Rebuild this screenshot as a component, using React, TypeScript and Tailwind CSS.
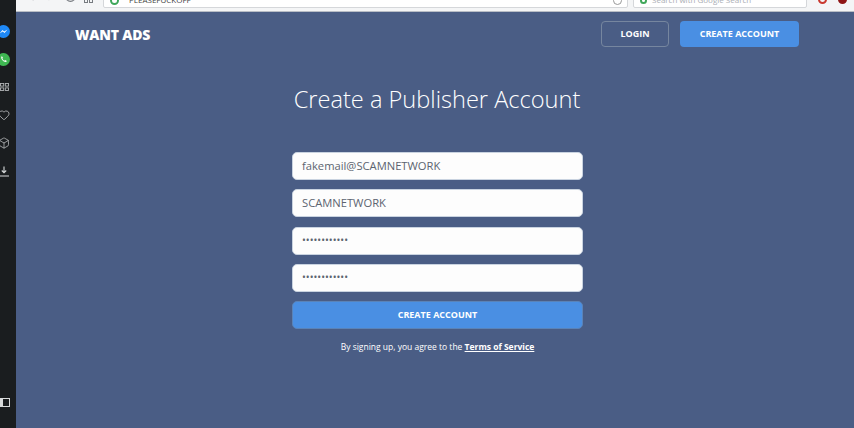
import { Heart, Box, RotateCw, ChevronLeft, ChevronRight } from 'lucide-react';

const Field = ({ value, secret }: { value: string; secret?: boolean }) => (
  <div className={secret ? 'flex h-[28px] w-full items-center rounded-[5px] border border-[#c9d3e0] bg-[#fdfdfd] px-[9px] text-[10.2px] text-[#5c6470]' : 'flex h-[28px] w-full items-center rounded-[5px] border border-[#c9d3e0] bg-[#fdfdfd] px-[9px] text-[11.2px] text-[#5c6470]'}>
    {value}
  </div>
);

const Sidebar = () => (
  <div className="flex w-[16px] shrink-0 flex-col bg-[#1a1d1f] pt-[17px] text-[#d8dadb]">
    <div className="flex h-[28px] items-center">
      <svg width="13" height="13" viewBox="0 0 13 13" className="-ml-[3px]">
        <circle cx="6.5" cy="6.5" r="6.5" fill="#1e88f5" />
        <path d="M2.5 8.5 L5.5 5 L7.2 6.6 L10.5 4.5 L7.5 8 L5.8 6.4 Z" fill="#fff" />
      </svg>
    </div>
    <div className="flex h-[28px] items-center">
      <svg width="13" height="13" viewBox="0 0 13 13" className="-ml-[3px]">
        <circle cx="6.5" cy="6.5" r="6.5" fill="#3fb752" />
        <path d="M4.3 3.6 C3.5 5.8 6.6 9.6 9.4 9 L9.6 7.8 L8 7 L7.3 7.7 C6.4 7.3 5.6 6.4 5.3 5.6 L6 4.9 L5.2 3.4 Z" fill="#fff" />
      </svg>
    </div>
    <div className="flex h-[28px] items-center">
      <svg width="9" height="8" viewBox="0 0 9 8" fill="none" stroke="currentColor" strokeWidth="0.9" opacity="0.8">
        <rect x="0.5" y="0.5" width="3.2" height="2.6" />
        <rect x="5.3" y="0.5" width="3.2" height="2.6" />
        <rect x="0.5" y="4.9" width="3.2" height="2.6" />
        <rect x="5.3" y="4.9" width="3.2" height="2.6" />
      </svg>
    </div>
    <div className="flex h-[28px] items-center">
      <Heart size={12} strokeWidth={1.4} className="-ml-[2px]" />
    </div>
    <div className="flex h-[28px] items-center">
      <Box size={12} strokeWidth={1.3} className="-ml-[2px]" />
    </div>
    <div className="flex h-[28px] items-center">
      <svg width="11" height="11" viewBox="0 0 11 11" fill="none" stroke="currentColor" strokeWidth="1.1" className="-ml-[1px]">
        <path d="M5 0.5 V6.5 M2.8 4.5 L5 6.8 L7.2 4.5 M0 10 H10" />
      </svg>
    </div>
    <div className="mt-auto mb-[21px] flex h-[9px] w-[10px] border border-[#d8dadb]">
      <div className="h-full w-[2px] bg-[#d8dadb]" />
    </div>
  </div>
);

const Toolbar = () => (
  <div className="flex h-[12px] shrink-0 items-start overflow-hidden border-b border-[#b9bec6] bg-[#f4f5f6] pl-[9px] text-[#777b80]">
    <ChevronLeft size={13} className="-mt-[10px]" />
    <ChevronRight size={13} className="-mt-[10px] ml-[6px] text-[#c8c8c8]" />
    <RotateCw size={13} className="-mt-[10px] ml-[7px]" />
    <svg width="9" height="8" viewBox="0 0 9 8" fill="none" stroke="currentColor" className="-mt-[5px] ml-[7px]">
      <rect x="0.5" y="0.5" width="3" height="7" />
      <rect x="5.5" y="0.5" width="3" height="7" />
    </svg>
    <div className="-mt-[8px] ml-[10px] flex h-[16px] w-[525px] shrink-0 items-center rounded-[2px] border border-[#d5d7da] bg-white pl-[6px] pr-[5px] text-[8px] text-[#444]">
      <div className="h-[9px] w-[9px] shrink-0 rounded-full border-2 border-[#3fa75a]" />
      <span className="ml-[10px]">PLEASEFUCKOFF</span>
      <div className="ml-auto h-[9px] w-[9px] rounded-full border border-[#999]" />
    </div>
    <div className="-mt-[8px] ml-[5px] flex h-[16px] w-[174px] shrink-0 items-center rounded-[2px] border border-[#d5d7da] bg-white pl-[6px] text-[8px] text-[#a9adb3]">
      <div className="h-[7px] w-[7px] shrink-0 rounded-full border-2 border-[#3fa75a]" />
      <span className="ml-[5px]">Search with Google Search</span>
    </div>
    <div className="-mt-[5px] ml-[11px] h-[9px] w-[9px] shrink-0 rounded-full border-2 border-[#c9382f]" />
    <div className="-mt-[5px] ml-[11px] h-[9px] w-[9px] shrink-0 rounded-full bg-[#8f1616]" />
  </div>
);

const App = () => {
  return (
    <div className="flex h-[428px] w-[854px] overflow-hidden bg-[#4a5d85] font-['Open_Sans',sans-serif]">
      <Sidebar />
      <div className="flex min-w-0 flex-1 flex-col">
        <Toolbar />
        <div className="flex items-center justify-between pt-[9px] pl-[59px] pr-[55px]">
          <div className="text-[14px] font-extrabold tracking-[-0.2px] text-white">WANT ADS</div>
          <div className="flex gap-[11px]">
            <div className="flex h-[26px] w-[68px] items-center justify-center rounded-[4px] border border-[#76869f] text-[9px] font-bold text-white">
              LOGIN
            </div>
            <div className="flex h-[26px] w-[119px] items-center justify-center rounded-[4px] bg-[#4a8fe3] text-[9px] font-bold text-white">
              CREATE ACCOUNT
            </div>
          </div>
        </div>
        <h1 className="mt-[34px] pl-[4px] text-center text-[23.6px] font-light leading-[36px] text-white">
          Create a Publisher Account
        </h1>
        <div className="mt-[35px] ml-[276px] flex w-[291px] flex-col gap-[9.25px]">
          <Field value="fakemail@SCAMNETWORK" />
          <Field value="SCAMNETWORK" />
          <Field value="••••••••••••" secret />
          <Field value="••••••••••••" secret />
          <div className="flex h-[28px] items-center justify-center rounded-[5px] border border-[#5a83b8] bg-[#4a8fe3] text-[9px] font-bold text-white">
            CREATE ACCOUNT
          </div>
          <p className="mt-[3px] text-center text-[8.5px] text-white">
            By signing up, you agree to the <span className="font-bold underline">Terms of Service</span>
          </p>
        </div>
      </div>
    </div>
  );
};

export default App;
